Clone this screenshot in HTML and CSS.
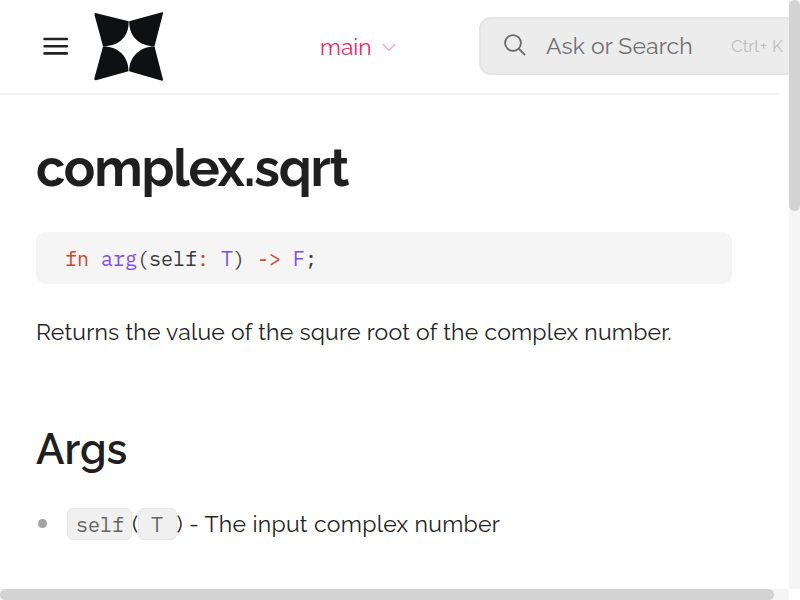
FILE: index.html
```html
<!DOCTYPE html>
<html lang="en">
<head>
<meta charset="utf-8">
<title>complex.sqrt</title>
<link rel="stylesheet" href="styles.css">
</head>
<body>
<div class="viewport">
  <header class="header">
    <svg class="menu-icon" viewBox="0 0 26 18" width="26" height="18"><path d="M1.6 2H23.8M1.6 9.2H23.8M1.6 16.4H23.8"/></svg>
    <svg class="logo" viewBox="0 0 70 70" width="70" height="70"><path d="M1.5 1 34.7 9.2V10C34.7 25 25 34.3 9 34.3L.5 3Q0 1 1.5 1ZM68 .3Q69.2 0 69 1.5L60.5 34.3C46 34.3 35.2 25 35.2 10V9.2ZM9 34.6C25 34.6 34.5 45 34.5 59.3L2 68.3Q0 68.5.3 66.5ZM60.5 34.6C46 34.6 35.2 45 35.2 59.3L68 68.7Q69.3 68.7 69 67.5Z"/></svg>
    <div class="version"><span class="version-name">main</span><svg viewBox="0 0 14 9" width="14" height="9"><path d="M.7 1 7 7.2 13.3 1"/></svg></div>
    <div class="search">
      <svg viewBox="0 0 22 22" width="22" height="22"><circle cx="9" cy="9" r="7.9"/><path d="M14.7 14.7 21 21"/></svg>
      <span class="search-label">Ask or Search</span>
      <span class="shortcut">Ctrl<span class="plus">+</span><span class="key">K</span></span>
    </div>
  </header>
  <main class="content">
    <h1>complex.sqrt</h1>
    <pre class="code"><span class="op">fn</span> <span class="type">arg</span>(self<span class="op">:</span> <span class="type">T</span>) <span class="op">-&gt;</span> <span class="type">F</span>;</pre>
    <p>Returns the value of the squre root of the complex number.</p>
    <h2>Args</h2>
    <ul><li><code class="chip chip-self">self</code><span class="paren">(</span><code class="chip chip-type">T</code><span class="item-text">) - The input complex number</span></li></ul>
  </main>
</div>
<div class="track track-y"><div class="thumb"></div></div>
<div class="track track-x"><div class="thumb"></div></div>
</body>
</html>
```
FILE: styles.css
```css
* { box-sizing: border-box; }
body {
  margin: 0;
  width: 800px;
  height: 600px;
  overflow: hidden;
  display: grid;
  grid-template: 589px 11px / 789px 11px;
  background: #fff;
  color: #1f1f1f;
  font-family: Raleway, Lato, sans-serif;
}
svg { fill: none; flex: none; }
.viewport { overflow: hidden; }
.header {
  width: 779px;
  height: 95px;
  border-bottom: 2px solid #f2f2f2;
  display: flex;
  align-items: flex-start;
}
.menu-icon { margin: 37px 0 0 43px; stroke: #222; stroke-width: 2.6; stroke-linecap: round; }
.logo { margin: 12px 0 0 25px; fill: #0f1011; }
.version {
  width: 76px;
  margin: 32px 0 0 156px;
  flex: none;
  display: flex;
  align-items: center;
  justify-content: space-between;
  color: #f0286c;
  font-size: 22.75px;
  line-height: 30px;
}
.version svg { stroke: #f9a9c4; stroke-width: 1.6; }
.search {
  width: 340px;
  height: 58px;
  margin: 17px 0 0 83px;
  flex: none;
  display: flex;
  align-items: center;
  border: 2px solid #e4e4e4;
  border-radius: 12px;
  background: #ececec;
  padding-left: 23px;
  color: #707070;
  white-space: nowrap;
}
.search svg { stroke: #6a6a6a; stroke-width: 1.8; margin: 0 20px 2px 0; }
.search-label { width: 185px; margin-bottom: 2px; font-size: 23px; letter-spacing: .1px; }
.shortcut { color: #bcbcbc; font-size: 17px; font-weight: 400; }
.plus { margin: 0 1px; }
.key { margin-left: 4px; }
.content { padding: 0 57px 0 36px; }
h1 { margin: 38px 0 0; font-size: 52px; line-height: 70px; font-weight: 700; letter-spacing: -1.2px; }
.code {
  width: 696.5px;
  height: 52px;
  margin: 29px 0 0 -.5px;
  padding-left: 29.5px;
  border-radius: 9px;
  background: #f5f5f5;
  color: #3a3a3a;
  font: 20px/53px "IBM Plex Mono", "Liberation Mono", monospace;
}
.op { color: #c84b31; }
.type { color: #8250df; }
p { margin: 30px 0 0; font-size: 23px; line-height: 36px; letter-spacing: .2px; white-space: nowrap; }
h2 { margin: 70px 0 0; font-size: 42.25px; line-height: 58px; font-weight: 600; }
ul { margin: 30px 0 0; padding: 0; list-style: none; }
li { display: flex; align-items: center; height: 32px; font-size: 23px; white-space: nowrap; }
li::before { content: ""; width: 9px; height: 9px; margin: 0 20px 2px 2px; border-radius: 50%; background: #a3a3a3; }
.chip {
  height: 32px;
  border: 1.5px solid #e6e6e6;
  border-radius: 6px;
  background: #f0f0f0;
  color: #636363;
  font: 20px/32px "IBM Plex Mono", "Liberation Mono", monospace;
  text-align: center;
}
.chip-self { width: 65px; padding-left: 1px; }
.chip-type { width: 39px; }
.paren { width: 5.5px; margin-bottom: 2px; }
.item-text { margin-bottom: 2px; letter-spacing: .28px; }
.track { background: #f5f5f5; }
.track-y { grid-area: 1 / 2; }
.track-x { grid-area: 2 / 1; }
.thumb { background: #d3d3d3; border-radius: 6px; }
.track-y .thumb { height: 211px; }
.track-x .thumb { width: 774px; height: 11px; }
```
